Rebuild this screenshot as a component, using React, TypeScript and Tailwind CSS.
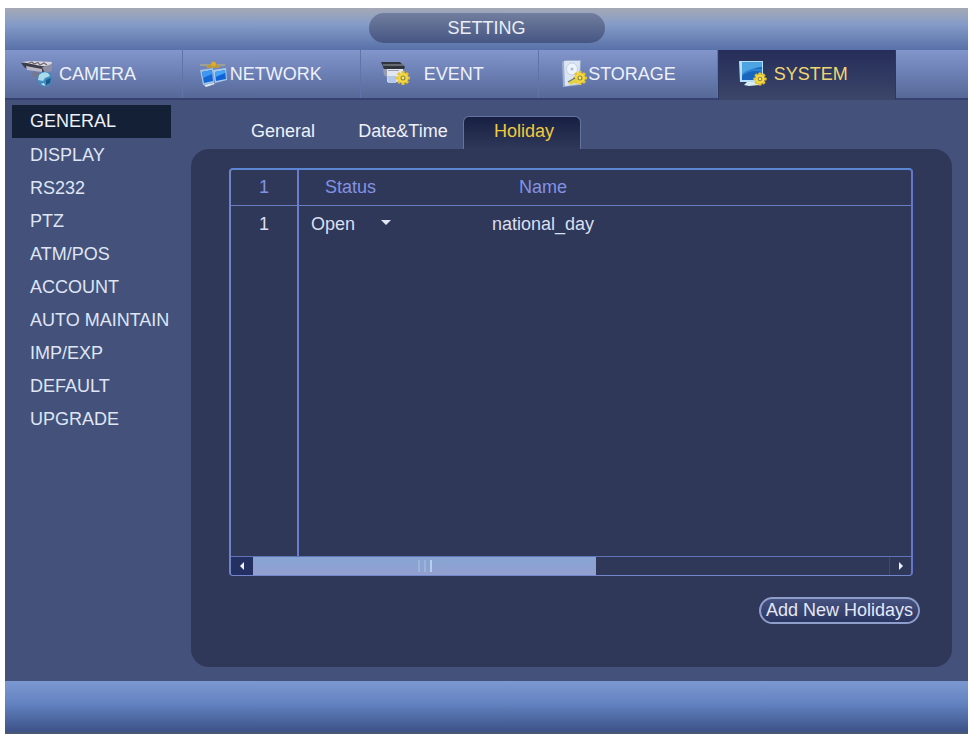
import { useState, type ReactNode } from 'react';

function Gear({ x, y, r = 5 }: { x: number; y: number; r?: number }) {
  return (
    <g transform={`translate(${x} ${y})`}>
      {[0, 45, 90, 135].map((angle) => (
        <rect
          key={angle}
          x={-1.6}
          y={-r - 2}
          width={3.2}
          height={2 * r + 4}
          rx={0.8}
          fill="#e6c22e"
          transform={`rotate(${angle})`}
        />
      ))}
      <circle r={r} fill="#f3d83f" />
      <circle r={r * 0.5} fill="#8f8440" />
      <circle r={r * 0.28} fill="#f7e873" />
    </g>
  );
}

function Icon({ children }: { children: ReactNode }) {
  return (
    <svg
      viewBox="0 0 40 32"
      className="col-start-1 row-start-1 ml-[14px] h-8 w-10 justify-self-start"
      aria-hidden="true"
    >
      {children}
    </svg>
  );
}

const cameraIcon = (
  <Icon>
    <path d="M2 5 L20 4 L33 6 L33 12 L24 14 L6 10 Z" fill="#3c3d48" />
    <path d="M3 4 L13 3 L33 4 L32 8 L22 8 Z" fill="#d9d6df" />
    <path d="M9 5.500 L13 4 L15 6 L19 4.500 L21 7 L25 5 L28 7" stroke="#6b6670" strokeWidth="1.2" fill="none" />
    <path d="M7 8 L23 11 L23 14 L8 12 Z" fill="#b9b7c6" />
    <path d="M23 9 L33 6 L33 13 L26 15 Z" fill="#8e8fa4" />
    <path d="M14 13 L20 15 L19 20 L13 18 Z" fill="#77788b" />
    <circle cx="26" cy="21" r="7.500" fill="#3f8cc0" />
    <path d="M20 17 Q24 13 29 15 L31 18 L26 20 L24 23 L19 22 Z" fill="#a9dcea" />
    <path d="M27 22 L32 20 L31 25 L27 27 Z" fill="#1f5788" />
    <path d="M22 26 L25 25 L26 28 Z" fill="#d2edf0" />
  </Icon>
);

const networkIcon = (
  <Icon>
    <path d="M3 7 H28" stroke="#a8a98f" strokeWidth="1.500" />
    <path d="M9 8 Q16 3 23 8 L22 10 H10 Z" fill="#b69a43" />
    <circle cx="16.500" cy="6" r="2.500" fill="#e0a92a" />
    <path d="M3 12 L16 10 L17 25 L6 27 Z" fill="#9fc2e7" />
    <path d="M5 14 L15 12 L16 23 L7 25 Z" fill="#1466d4" />
    <path d="M5 14 L15 12 L15 16 L6 20 Z" fill="#3e98f2" />
    <path d="M16 12 L29 10 L30 22 L18 25 Z" fill="#a8ccec" />
    <path d="M18 14 L28 12 L29 21 L19 23 Z" fill="#0f63d8" />
    <path d="M18 14 L28 12 L28 15 L18.500 19 Z" fill="#44a5f7" />
    <path d="M7 27 L17 25 L18 26 L9 29 Z" fill="#dcebf4" />
  </Icon>
);

const eventIcon = (
  <Icon>
    <path d="M6 4 L25 4 L30 9 L29 11 L9 11 Z" fill="#30343e" />
    <path d="M8 7 H28" stroke="#777b82" strokeWidth="1.500" />
    <path d="M8 11 L13 11 L14 21 L9 17 Z" fill="#969daf" />
    <rect x="12" y="11" width="16" height="13" fill="#e3e6ef" />
    <path d="M12 18 H21 V25 H13 Z" fill="#b4c8e9" />
    <path d="M13 12.500 H24" stroke="#9b9faf" />
    <Gear x={28} y={20} r={5} />
  </Icon>
);

const storageIcon = (
  <Icon>
    <path d="M9 4 L13 2 H28 L27 27 L10 29 Z" fill="#9bb0d0" />
    <path d="M11 3 H27 L26 26 L12 28 Z" fill="#dce5f3" />
    <ellipse cx="19" cy="11" rx="5.500" ry="6" fill="#eef4fb" stroke="#c3d0e6" />
    <circle cx="19" cy="11" r="1.500" fill="#a9bbd8" />
    <Gear x={27} y={20} r={5} />
    <path d="M15 25 L23 20 L25 23 L18 27 Z" fill="#e4d33d" />
    <path d="M15 24 L22 20" stroke="#6d7458" strokeWidth="1.200" />
  </Icon>
);

const systemIcon = (
  <Icon>
    <path d="M6 3 H30 V24 H7 Z" fill="#b5e0f7" />
    <rect x="9" y="4" width="20" height="18" fill="#1765bd" />
    <path d="M9 4 H29 V9 Q20 9 9 17 Z" fill="#4ea3e3" />
    <path d="M9 18 Q18 11 29 14 V11 Q18 9 9 16 Z" fill="#2b82d2" />
    <path d="M14 24 H25 L26 27 L16 28 L11 27 Z" fill="#d7edf5" />
    <Gear x={27} y={21} r={4.6} />
  </Icon>
);

const sections = [
  { name: 'CAMERA', icon: cameraIcon },
  { name: 'NETWORK', icon: networkIcon },
  { name: 'EVENT', icon: eventIcon },
  { name: 'STORAGE', icon: storageIcon },
  { name: 'SYSTEM', icon: systemIcon },
];

const menu = [
  'GENERAL',
  'DISPLAY',
  'RS232',
  'PTZ',
  'ATM/POS',
  'ACCOUNT',
  'AUTO MAINTAIN',
  'IMP/EXP',
  'DEFAULT',
  'UPGRADE',
];

const tabs = ['General', 'Date&Time', 'Holiday'];

function TopNav() {
  const [active, setActive] = useState('SYSTEM');
  return (
    <nav
      aria-label="Settings sections"
      className="grid h-[50px] grid-cols-[repeat(5,18.5%)_1fr] border-b-2 border-[#35426f] bg-linear-to-b from-[#8396cc] via-[#6b7fb4] to-[#566896]"
    >
      {sections.map(({ name, icon }) => (
        <button
          key={name}
          type="button"
          onClick={() => setActive(name)}
          className={
            name === active
              ? '-mb-0.5 grid items-center border-x border-[#2c3763] bg-linear-to-b from-[#262d59] to-[#3b4669] pb-0.5 text-[#efd673]'
              : 'grid items-center border-r border-[#6174a8] text-[#eef1fb]'
          }
        >
          {icon}
          <span className="col-start-1 row-start-1 ml-2 justify-self-center">{name}</span>
        </button>
      ))}
    </nav>
  );
}

function SideMenu() {
  const [active, setActive] = useState('GENERAL');
  return (
    <nav aria-label="System pages" className="w-[186px] shrink-0 pt-[5px] pr-5 pl-[7px]">
      <ul>
        {menu.map((item) => (
          <li key={item}>
            <button
              type="button"
              onClick={() => setActive(item)}
              className={
                item === active
                  ? 'h-[33px] w-full bg-[#132036] pb-0.5 pl-[18px] text-left whitespace-nowrap text-[#eef1f8]'
                  : 'h-[33px] w-full pl-[18px] text-left whitespace-nowrap text-[#dfe5f5]'
              }
            >
              {item}
            </button>
          </li>
        ))}
      </ul>
    </nav>
  );
}

function ScrollBar() {
  return (
    <div className="flex h-[19px] border-t border-[#6273b8]">
      <button type="button" aria-label="Scroll left" className="grid w-[22px] place-items-center bg-[#243061]">
        <svg viewBox="0 0 8 8" className="h-2 w-2" aria-hidden="true">
          <path d="M6 0 V8 L2 4 Z" fill="#eef1fb" />
        </svg>
      </button>
      <div className="flex-1">
        <div className="flex h-full w-[54%] items-center justify-center gap-1 bg-linear-to-b from-[#87a5d3] to-[#939fd0]">
          <span className="h-3 w-0.5 bg-[#9ab5dc]" />
          <span className="h-3 w-0.5 bg-[#9ab5dc]" />
          <span className="h-3 w-0.5 bg-[#b5d0ea]" />
        </div>
      </div>
      <button
        type="button"
        aria-label="Scroll right"
        className="grid w-[22px] place-items-center border-l border-[#3d4875]"
      >
        <svg viewBox="0 0 8 8" className="h-2 w-2" aria-hidden="true">
          <path d="M2 0 V8 L6 4 Z" fill="#eef1fb" />
        </svg>
      </button>
    </div>
  );
}

function HolidayTable() {
  return (
    <div className="mr-[7px] flex flex-1 flex-col overflow-hidden rounded-[4px] border-2 border-b border-t-[#5b86d3] border-r-[#6477cd] border-b-[#7486cc] border-l-[#6d84c8]">
      <div className="grid flex-1">
        <table className="h-full w-full table-fixed border-collapse">
          <colgroup>
            <col className="w-[67px]" />
            <col className="w-[104px]" />
            <col className="w-[282px]" />
            <col />
          </colgroup>
          <thead>
            <tr className="h-[35px] border-b border-[#6b7cc0] text-[#8292e3]">
              <th scope="col" className="border-r-2 border-[#6b7ccd] font-normal">
                1
              </th>
              <th scope="col" className="font-normal">
                Status
              </th>
              <th scope="col" className="font-normal">
                Name
              </th>
              <td />
            </tr>
          </thead>
          <tbody>
            <tr className="h-[37px] text-[#d9dff0]">
              <td className="border-r-2 border-[#6b7ccd] text-center">1</td>
              <td className="pl-3">
                <div className="relative w-20">
                  <select
                    aria-label="Status"
                    defaultValue="Open"
                    className="block w-full appearance-none bg-transparent"
                  >
                    <option>Open</option>
                    <option>Close</option>
                  </select>
                  <svg
                    viewBox="0 0 10 6"
                    className="pointer-events-none absolute top-2.5 right-0 h-1.5 w-2.5"
                    aria-hidden="true"
                  >
                    <path d="M0 0 H10 L5 5 Z" fill="#e3e8f6" />
                  </svg>
                </div>
              </td>
              <td className="text-center">national_day</td>
              <td />
            </tr>
            <tr aria-hidden="true">
              <td className="border-r-2 border-[#6b7ccd]" />
              <td colSpan={3} />
            </tr>
          </tbody>
        </table>
      </div>
      <ScrollBar />
    </div>
  );
}

export default function App() {
  const [tab, setTab] = useState('Holiday');
  return (
    <div className="flex min-h-screen flex-col bg-white pt-2 pr-[3px] pb-[3px] pl-[5px] font-['Liberation_Sans',Arial,sans-serif] text-lg">
      <header className="flex h-[42px] justify-center bg-linear-to-b from-[#a5a9b5] via-[#849bc8] via-40% to-[#5871a8] pt-[5px]">
        <h1 className="h-[30px] w-[236px] rounded-full bg-linear-to-b from-[#727e9e] to-[#465683] text-center leading-[30px] text-[#e9edf7]">
          SETTING
        </h1>
      </header>
      <TopNav />
      <main className="flex flex-1 bg-[#44527b]">
        <SideMenu />
        <section className="flex min-w-0 flex-1 flex-col pt-4 pr-4 pb-[14px]">
          <div role="tablist" className="flex h-[33px] pl-8">
            {tabs.map((name) => (
              <button
                key={name}
                type="button"
                role="tab"
                aria-selected={name === tab}
                onClick={() => setTab(name)}
                className={
                  name === tab
                    ? 'w-[118px] rounded-t-md border border-b-0 border-[#65749f] bg-linear-to-b from-[#172042] to-[#303859] pb-1 pl-1 text-[#f0c93d]'
                    : 'w-[120px] pb-1 text-[#eef1fa]'
                }
              >
                {name}
              </button>
            ))}
          </div>
          <div
            role="tabpanel"
            aria-label={tab}
            className="flex flex-1 flex-col rounded-[18px] bg-[#303859] pt-[19px] pr-8 pb-[43px] pl-[38px]"
          >
            <HolidayTable />
            <button
              type="button"
              className="mt-[21px] h-[27px] self-end rounded-full border-2 border-[#8f9dcb] bg-linear-to-b from-[#46527f] to-[#2b3561] px-[5px] leading-[23px] text-[#e2e8f6]"
            >
              Add New Holidays
            </button>
          </div>
        </section>
      </main>
      <footer className="h-[53px] border-b-2 border-[#4b5873] bg-linear-to-b from-[#7c98d0] via-[#6282c0] via-45% to-[#3d5288]" />
    </div>
  );
}
